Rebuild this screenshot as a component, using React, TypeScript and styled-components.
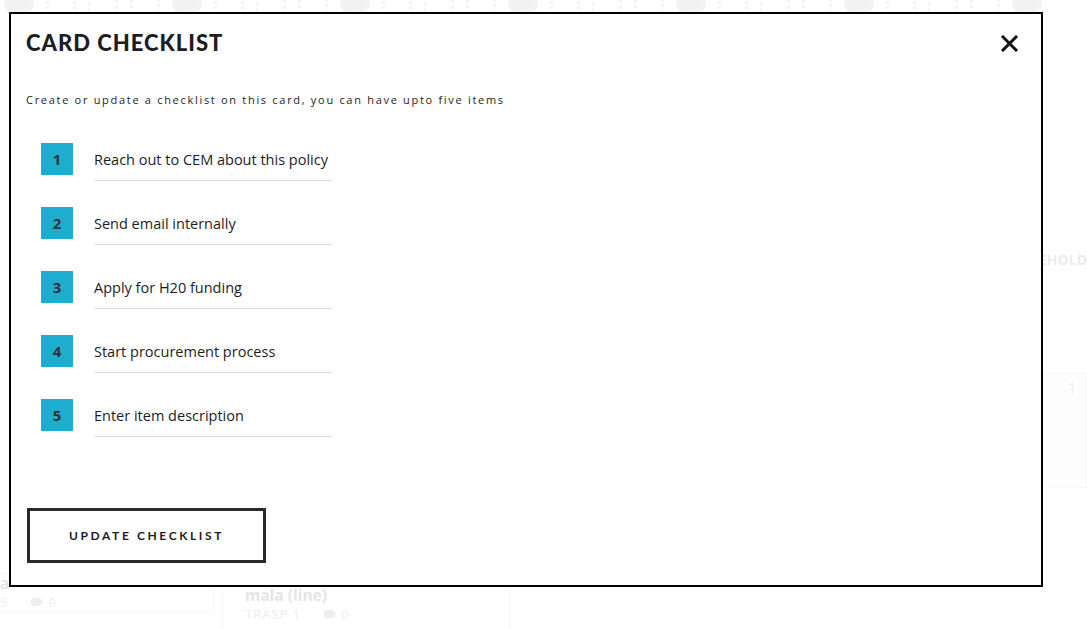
import styled, { createGlobalStyle } from "styled-components";

const GlobalStyle = createGlobalStyle`
	html, body {
		margin: 0;
		padding: 0;
		background: #ffffff;
		overflow: hidden;
	}
	* {
		box-sizing: border-box;
	}
`;

const items = [
	"Reach out to CEM about this policy",
	"Send email internally",
	"Apply for H20 funding",
	"Start procurement process",
	"Enter item description"
];

// --- faded board behind the modal ---

const Page = styled.div`
	width: 1087px;
	height: 629px;
	display: flex;
	flex-direction: column;
	overflow: hidden;
	font-family: "Open Sans", sans-serif;
`;

const MotifStrip = styled.div`
	flex: 0 0 14px;
	display: flex;
	gap: 12px;
	padding-left: 4px;
	overflow: hidden;
`;

const Motif = styled.div<{ $kind: number }>`
	flex: 0 0 30px;
	height: 26px;
	margin-top: -10px;
	border-radius: ${(p) => ["50%", "45% 45% 15% 15%", "20%", "50% 50% 0 0"][p.$kind]};
	background: ${(p) => (p.$kind === 0 ? "#f2f2f2" : "transparent")};
	border: 3px dotted #f4f4f4;
`;

const Board = styled.div`
	flex: 1;
	display: flex;
	gap: 8px;
`;

const Column = styled.div<{ $width: number }>`
	flex: 0 0 ${(p) => p.$width}px;
	display: flex;
	flex-direction: column;
`;

const Spacer = styled.div`
	flex: 1;
`;

const ColumnHead = styled.div`
	margin-top: 236px;
	font-weight: 700;
	font-size: 14px;
	color: #ececec;
	white-space: nowrap;
`;

const GhostCard = styled.div<{ $bottom: number }>`
	margin-bottom: ${(p) => p.$bottom}px;
	border: 1px solid #f8f8f8;
	padding: 0 22px;
	color: #e5e5e5;
`;

const GhostTitle = styled.div`
	font-weight: 700;
	font-size: 15.5px;
	line-height: 18px;
`;

const GhostMeta = styled.div`
	display: flex;
	align-items: center;
	gap: 22px;
	font-size: 13px;
	line-height: 20px;
	color: #eeeeee;
	letter-spacing: 1px;
`;

const Comments = styled.span`
	display: flex;
	align-items: center;
	gap: 5px;
`;

const RightCard = styled.div`
	margin-top: 104px;
	height: 115px;
	border: 1px solid #f8f8f8;
	background: #fdfdfd;
	padding: 4px 0 0 28px;
	font-size: 14px;
	color: #eeeeee;
`;

// --- modal ---

const Modal = styled.div`
	position: fixed;
	top: 12px;
	left: 9px;
	width: 1034px;
	height: 575px;
	border: 2px solid #000;
	background: #fff;
	display: flex;
	flex-direction: column;
	padding: 18px 23px 22px 15px;
	color: #1d1d1f;
`;

const Header = styled.div`
	display: flex;
	align-items: flex-start;
	justify-content: space-between;
`;

const Title = styled.h1`
	margin: 0;
	font-family: Lato, sans-serif;
	font-weight: 900;
	font-size: 22px;
	line-height: 22px;
	letter-spacing: 1px;
	color: #1d1d1f;
`;

const CloseButton = styled.button`
	border: none;
	background: none;
	padding: 0;
	margin-top: 3px;
	width: 17px;
	height: 17px;
	display: flex;
	cursor: pointer;
`;

const Intro = styled.p`
	margin: 38px 0 0 0;
	font-family: "Open Sans", sans-serif;
	font-size: 11px;
	line-height: 16px;
	letter-spacing: 1.7px;
	color: #1d1d1f;
`;

const List = styled.ol`
	list-style: none;
	margin: 35px 0 0 0;
	padding: 0 0 0 15px;
	display: flex;
	flex-direction: column;
	gap: 26px;
`;

const Row = styled.li`
	display: flex;
	align-items: flex-start;
	gap: 21px;
`;

const Num = styled.span`
	flex: 0 0 32px;
	height: 32px;
	display: flex;
	align-items: center;
	justify-content: center;
	background: #1eadcf;
	color: #333;
	font-family: "Open Sans", sans-serif;
	font-weight: 700;
	font-size: 15px;
`;

const ItemInput = styled.input`
	width: 238px;
	height: 38px;
	border: none;
	border-bottom: 1px solid #dcdcdc;
	padding: 0 0 5px 0;
	outline: none;
	background: transparent;
	font-family: "Open Sans", sans-serif;
	font-size: 14.5px;
	color: #1d1d1f;
`;

const Footer = styled.div`
	margin-top: auto;
	padding-left: 1px;
`;

const UpdateButton = styled.button`
	width: 239px;
	height: 55px;
	border: 3px solid #2a2a2e;
	background: #fff;
	padding: 0;
	font-family: Lato, sans-serif;
	font-weight: 700;
	font-size: 12px;
	letter-spacing: 2.6px;
	color: #1d1d1f;
	cursor: pointer;
`;

function CloseIcon() {
	return <svg width="17" height="17" viewBox="0 0 17 17">
		<path d="M2 2 L15 15 M15 2 L2 15" stroke="#111" strokeWidth="3" strokeLinecap="square" />
	</svg>;
}

function BubbleIcon() {
	return <svg width="13" height="11" viewBox="0 0 13 11">
		<path d="M6.5 0.5 C10 0.5 12.5 2.4 12.5 4.8 C12.5 7.2 10 9 6.5 9 C5.8 9 5.2 9 4.6 8.8 L1.5 10.5 L2.4 7.9 C1.2 7.1 0.5 6 0.5 4.8 C0.5 2.4 3 0.5 6.5 0.5 Z" fill="#eeeeee" />
	</svg>;
}

function Backdrop() {
	const motifs = Array.from({ length: 25 }, (_, i) => i);
	return <Page>
		<MotifStrip>
			{motifs.map((i) => <Motif key={i} $kind={(i * 7) % 4} />)}
		</MotifStrip>
		<Board>
			<Column $width={214}>
				<Spacer />
				<GhostCard $bottom={16} style={{ paddingLeft: 0, borderLeft: "none" }}>
					<GhostTitle>a</GhostTitle>
					<GhostMeta><span>5</span><Comments><BubbleIcon />0</Comments></GhostMeta>
				</GhostCard>
			</Column>
			<Column $width={288}>
				<Spacer />
				<GhostCard $bottom={0} style={{ borderBottom: "none", height: 56, paddingTop: 12 }}>
					<GhostTitle>mala (line)</GhostTitle>
					<GhostMeta><span>TRASP 1</span><Comments><BubbleIcon />0</Comments></GhostMeta>
				</GhostCard>
			</Column>
			<Spacer />
			<Column $width={46}>
				<ColumnHead>EHOLD</ColumnHead>
				<RightCard>1</RightCard>
			</Column>
		</Board>
	</Page>;
}

export default function App() {
	return <>
		<GlobalStyle />
		<Backdrop />
		<Modal>
			<Header>
				<Title>CARD CHECKLIST</Title>
				<CloseButton aria-label="Close"><CloseIcon /></CloseButton>
			</Header>
			<Intro>Create or update a checklist on this card, you can have upto five items</Intro>
			<List>
				{items.map((text, i) => <Row key={i}>
					<Num>{i + 1}</Num>
					<ItemInput defaultValue={text} />
				</Row>)}
			</List>
			<Footer>
				<UpdateButton>UPDATE CHECKLIST</UpdateButton>
			</Footer>
		</Modal>
	</>;
}
